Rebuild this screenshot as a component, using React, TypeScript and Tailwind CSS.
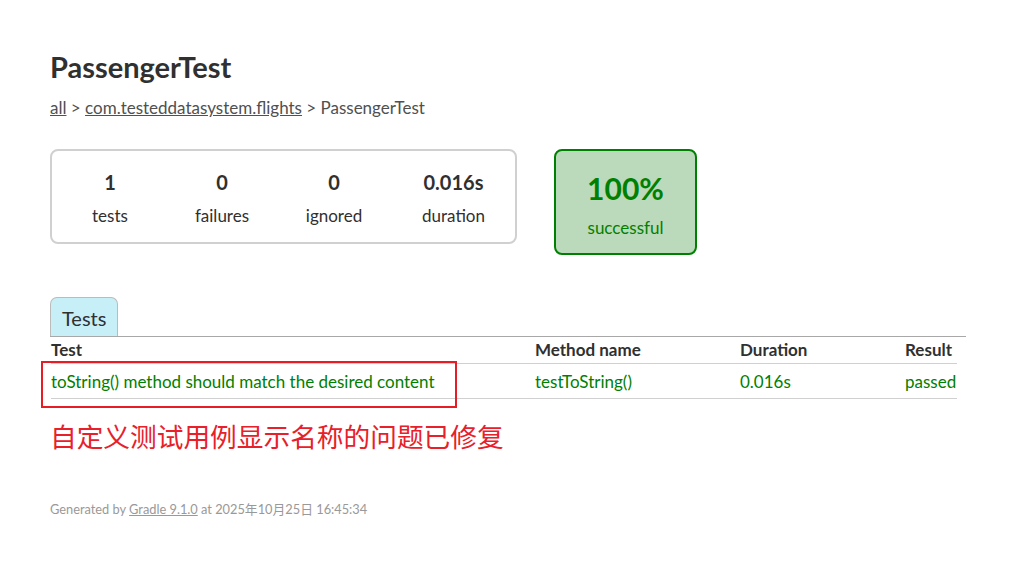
import React from "react";

export default function App() {
  const font = { fontFamily: '"Lato", "Noto Sans CJK SC", sans-serif' };
  return (
    <div className="relative w-[1016px] h-[563px] bg-white text-[#303030]" style={font}>
      <div className="px-[50px] pt-[49px]">
        <h1 className="text-[29px] font-bold leading-[36px] text-[#303030]">PassengerTest</h1>
        <div className="mt-[12px] text-[17px] leading-[22px] text-[#505050]">
          <a className="underline">all</a> &gt; <a className="underline">com.testeddatasystem.flights</a> &gt; PassengerTest
        </div>

        <div className="mt-[30px] flex items-start gap-[37px]">
          <div className="w-[467px] h-[95px] rounded-[8px] border-2 border-[#d0d0d0] flex items-start pt-[19px]">
            {[
              ["1", "tests", 116],
              ["0", "failures", 108],
              ["0", "ignored", 116],
              ["0.016s", "duration", 123],
            ].map(([n, l, w]) => (
              <div key={l as string} className="flex flex-col items-center" style={{ width: w as number }}>
                <div className="text-[20px] font-bold leading-[24px] text-[#303030]">{n}</div>
                <div className="mt-[11px] text-[17px] leading-[22px] text-[#303030]">{l}</div>
              </div>
            ))}
          </div>
          <div className="w-[143px] h-[106px] rounded-[8px] border-2 border-[#008000] bg-[#bbd9bb] flex flex-col items-center pt-[19px]">
            <div className="text-[30px] font-bold leading-[36px] text-[#008000]">100%</div>
            <div className="mt-[11px] text-[17px] leading-[22px] text-[#008000]">successful</div>
          </div>
        </div>

        <div className="mt-[42px] w-[916px]">
          <div className="flex">
            <div className="h-[39px] px-[11px] rounded-t-[7px] border border-b-0 border-[#bbbbbb] bg-[#c6eff8] text-[20px] leading-[40px] text-[#303030]">
              Tests
            </div>
          </div>
          <div className="h-px bg-[#a8a8a8]" />
          <div className="w-[907px] pl-px">
            <div className="grid grid-cols-[484px_205px_165px_1fr] text-[17px] font-bold leading-[26px] text-[#303030] border-b border-[#d0d0d0]">
              <div>Test</div>
              <div>Method name</div>
              <div>Duration</div>
              <div>Result</div>
            </div>
            <div className="grid grid-cols-[484px_205px_165px_1fr] text-[17px] leading-[33px] text-[#008000] border-b border-[#d0d0d0]">
              <div className="pt-[1px]">toString() method should match the desired content</div>
              <div className="pt-[1px]">testToString()</div>
              <div className="pt-[1px]">0.016s</div>
              <div className="pt-[1px]">passed</div>
            </div>
          </div>
        </div>

        <div className="mt-[21px] text-[26.7px] leading-[34px] text-[#e8202a]">自定义测试用例显示名称的问题已修复</div>

        <div className="mt-[47px] text-[12.8px] leading-[16px] text-[#999999]">
          Generated by <a className="underline">Gradle 9.1.0</a> at 2025年10月25日 16:45:34
        </div>
      </div>
      <div className="absolute left-[41px] top-[361px] w-[416px] h-[47px] border-2 border-[#e81c24]" />
    </div>
  );
}
